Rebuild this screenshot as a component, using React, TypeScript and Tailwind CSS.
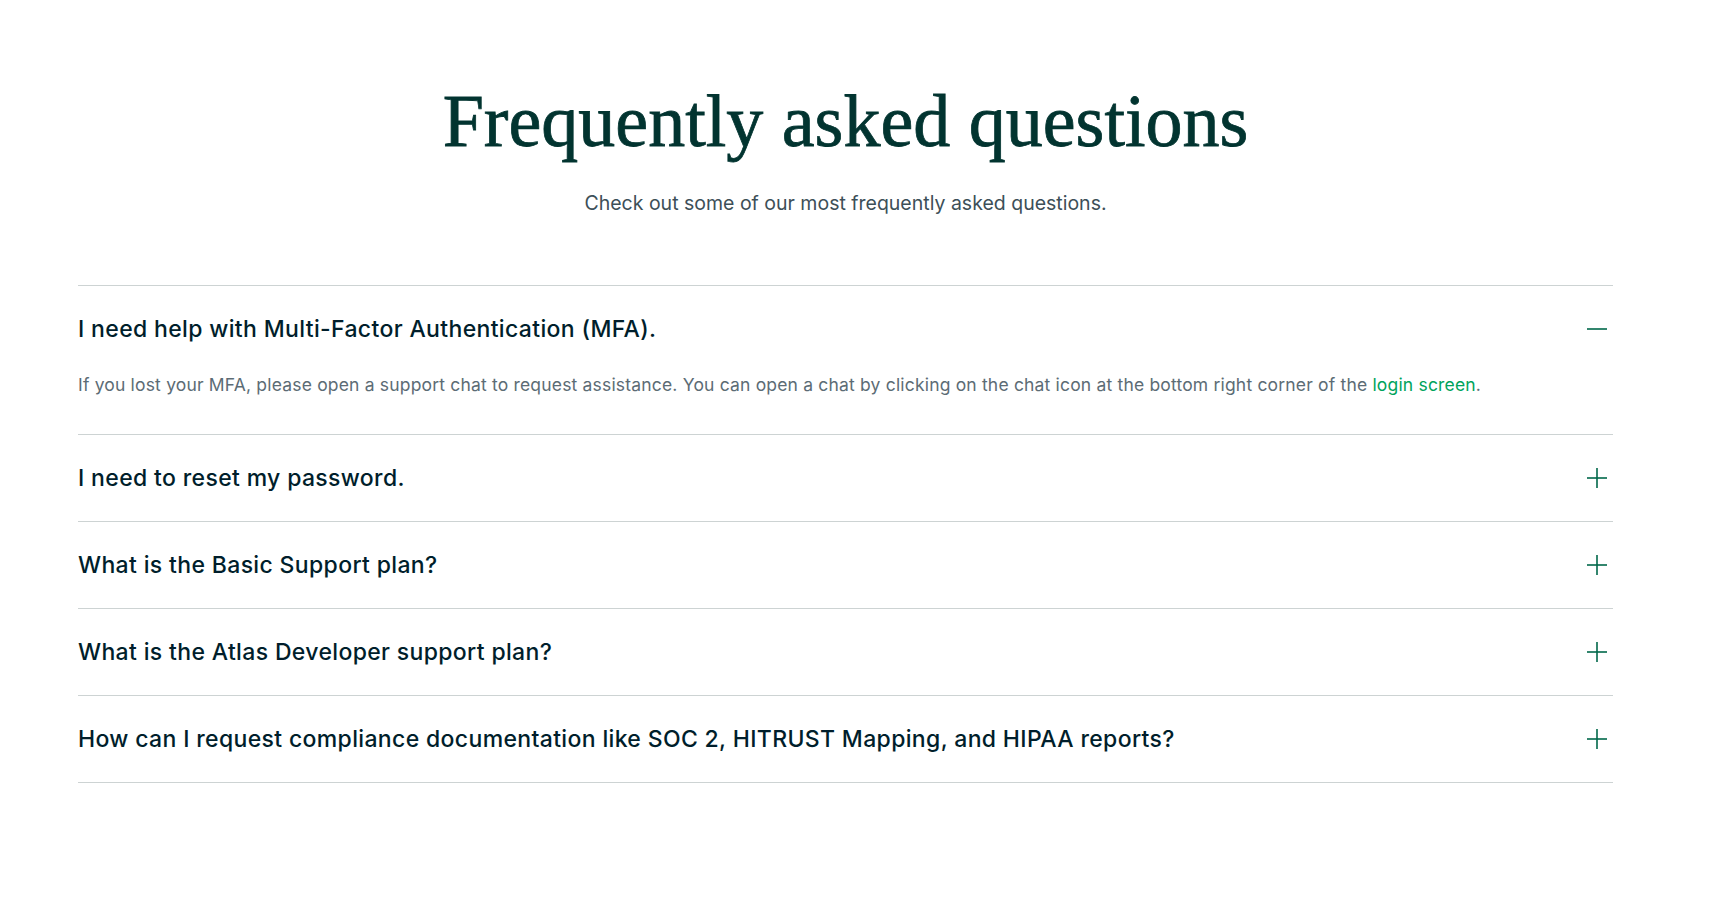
import * as React from "react";

interface Faq {
  question: string;
  answer?: React.ReactNode;
}

const faqs: Faq[] = [
  {
    question: "I need help with Multi-Factor Authentication (MFA).",
    answer: (
      <>
        If you lost your MFA, please open a support chat to request assistance. You can open a chat by
        clicking on the chat icon at the bottom right corner of the{" "}
        <a href="#" className="text-[#00A35C]">
          login screen
        </a>
        .
      </>
    ),
  },
  { question: "I need to reset my password." },
  { question: "What is the Basic Support plan?" },
  { question: "What is the Atlas Developer support plan?" },
  {
    question:
      "How can I request compliance documentation like SOC 2, HITRUST Mapping, and HIPAA reports?",
  },
];

const ToggleIcon: React.FC<{ open: boolean }> = ({ open }) => (
  <svg width="20" height="20" viewBox="0 0 20 20" className="shrink-0">
    <line x1="0" y1="10" x2="20" y2="10" stroke="#00684A" strokeWidth="1.6" />
    {!open && <line x1="10" y1="0" x2="10" y2="20" stroke="#00684A" strokeWidth="1.6" />}
  </svg>
);

const App: React.FC = () => {
  const [openIndex, setOpenIndex] = React.useState<number | null>(0);

  return (
    <div className="min-h-screen bg-white font-['Inter',sans-serif]">
      <div className="w-[1691px] pt-[84px] pb-[110px] flex flex-col items-center">
        <h1 className="font-['Liberation_Serif',serif] text-[74px] leading-none text-[#023430] [-webkit-text-stroke:0.8px_#023430]">
          Frequently asked questions
        </h1>
        <p className="mt-[31px] text-[19.5px] leading-[28px] text-[#3D4F58]">
          Check out some of our most frequently asked questions.
        </p>

        <div className="mt-[68px] w-[1535px] border-t border-[#CDD3D3]">
          {faqs.map((faq, index) => {
            const open = openIndex === index;
            return (
              <div key={index} className="border-b border-[#CDD3D3]">
                <button
                  onClick={() => setOpenIndex(open ? null : index)}
                  className="w-full h-[86px] flex items-center justify-between pr-[6px] text-left"
                >
                  <span className="text-[23px] tracking-[0.35px] font-medium leading-[30px] text-[#001E2B]">
                    {faq.question}
                  </span>
                  <ToggleIcon open={open} />
                </button>
                {open && faq.answer && (
                  <p className="pb-[36px] text-[17.5px] tracking-[0.18px] leading-[26px] text-[#5C6C75]">
                    {faq.answer}
                  </p>
                )}
              </div>
            );
          })}
        </div>
      </div>
    </div>
  );
};

export default App;
